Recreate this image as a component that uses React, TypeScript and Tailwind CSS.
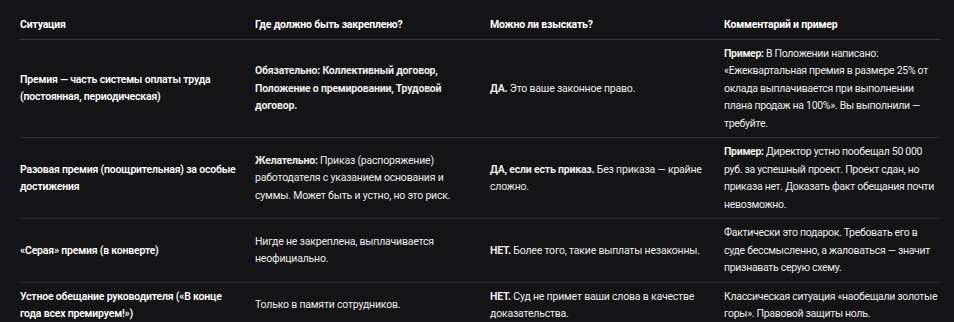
const rows = [
  {
    situation: "Премия — часть системы оплаты труда (постоянная, периодическая)",
    where: (
      <>
        <strong>Обязательно:</strong>{" "}
        <strong>Коллективный договор, Положение о премировании, Трудовой договор.</strong>
      </>
    ),
    can: (
      <>
        <strong>ДА.</strong> Это ваше законное право.
      </>
    ),
    comment: (
      <>
        <strong>Пример:</strong> В Положении написано: «Ежеквартальная премия в размере 25% от
        оклада выплачивается при выполнении плана продаж на 100%». Вы выполнили — требуйте.
      </>
    ),
  },
  {
    situation: "Разовая премия (поощрительная) за особые достижения",
    where: (
      <>
        <strong>Желательно:</strong> Приказ (распоряжение) работодателя с указанием основания и
        суммы. Может быть и устно, но это риск.
      </>
    ),
    can: (
      <>
        <strong>ДА, если есть приказ.</strong> Без приказа — крайне сложно.
      </>
    ),
    comment: (
      <>
        <strong>Пример:</strong> Директор устно пообещал 50 000 руб. за успешный проект. Проект
        сдан, но приказа нет. Доказать факт обещания почти невозможно.
      </>
    ),
  },
  {
    situation: "«Серая» премия (в конверте)",
    where: <>Нигде не закреплена, выплачивается неофициально.</>,
    can: (
      <>
        <strong>НЕТ.</strong> Более того, такие выплаты незаконны.
      </>
    ),
    comment: (
      <>
        Фактически это подарок. Требовать его в суде бессмысленно, а жаловаться — значит
        признавать серую схему.
      </>
    ),
  },
  {
    situation: "Устное обещание руководителя («В конце года всех премируем!»)",
    where: <>Только в памяти сотрудников.</>,
    can: (
      <>
        <strong>НЕТ.</strong> Суд не примет ваши слова в качестве доказательства.
      </>
    ),
    comment: <>Классическая ситуация «наобещали золотые горы». Правовой защиты ноль.</>,
  },
];

const headers = [
  "Ситуация",
  "Где должно быть закреплено?",
  "Можно ли взыскать?",
  "Комментарий и пример",
];

export default function App() {
  return (
    <div
      className="min-h-screen bg-[#141416] pl-5 pr-[14px] pt-[11px] text-[10.5px] leading-[17.5px] tracking-[-0.2px] text-[#ececec]"
      style={{ fontFamily: 'Roboto, "Noto Sans", sans-serif' }}
    >
      <table className="w-full table-fixed border-collapse">
        <colgroup>
          <col className="w-[235px]" />
          <col className="w-[235px]" />
          <col className="w-[234px]" />
          <col />
        </colgroup>
        <thead>
          <tr className="border-b border-[#3a3a3c]">
            {headers.map((h) => (
              <th key={h} className="py-[5px] pr-5 text-left align-middle font-bold text-white last:pr-0">
                {h}
              </th>
            ))}
          </tr>
        </thead>
        <tbody>
          {rows.map((r, i) => (
            <tr key={i} className="border-b border-[#2c2c2e]">
              <td className="py-[5px] pr-3 align-middle font-semibold text-white">{r.situation}</td>
              <td className="py-[5px] pr-5 align-middle">{r.where}</td>
              <td className="py-[5px] pr-5 align-middle">{r.can}</td>
              <td className="py-[5px] align-middle tracking-[-0.3px]">{r.comment}</td>
            </tr>
          ))}
        </tbody>
      </table>
    </div>
  );
}
